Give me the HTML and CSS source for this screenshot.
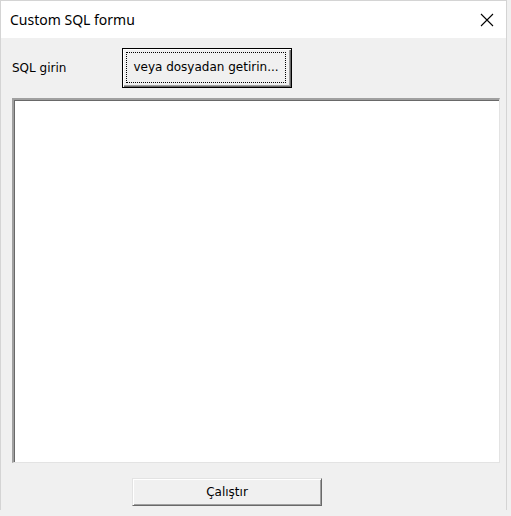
FILE: index.html
```html
<!DOCTYPE html>
<html>
<head>
<meta charset="utf-8">
<link rel="stylesheet" href="styles.css">
</head>
<body>
<div class="window">
  <div class="titlebar">
    <span class="title">Custom SQL formu</span>
    <svg class="close" width="14" height="14" viewBox="0 0 14 14"><path d="M1 1 L13 13 M13 1 L1 13" stroke="#000" stroke-width="1.1" fill="none"/></svg>
  </div>
  <div class="client">
    <div class="toprow">
      <span class="label">SQL girin</span>
      <div class="btn default"><span class="focus">veya dosyadan getirin...</span></div>
    </div>
    <div class="sqlbox"></div>
    <div class="btn run"><span>Çalıştır</span></div>
  </div>
</div>
</body>
</html>
```
FILE: styles.css
```css
html, body { margin: 0; padding: 0; }
body {
  width: 511px; height: 516px; overflow: hidden;
  background: #f0f0f0;
  font-family: "DejaVu Sans", sans-serif;
}
.window {
  width: 507px; height: 510px;
  box-sizing: border-box;
  border: 1px solid #d4d4d4;
  border-bottom: none;
  background: #f0f0f0;
  display: flex; flex-direction: column;
}
.titlebar {
  height: 37px; flex: none;
  background: #fff;
  display: flex; align-items: center; justify-content: space-between;
  padding: 0 9px 0 9px;
}
.title {
  font-family: "Noto Sans", "Open Sans", sans-serif;
  font-size: 14px; color: #000;
  margin-top: -1px;
}
.close { margin-right: 3px; }
.client {
  display: flex; flex-direction: column;
  padding: 10px 0 0 10px;
}
.toprow {
  display: flex; align-items: center; height: 40px;
}
.label {
  font-family: "DejaVu Sans", sans-serif;
  font-size: 12px; width: 110px; padding-left: 1px; color: #000;
}
.btn {
  box-sizing: border-box;
  background: #f0f0f0;
  display: flex; align-items: center; justify-content: center;
  font-family: "DejaVu Sans", sans-serif;
  color: #000;
}
.btn.default {
  width: 170px; height: 40px;
  border: 1px solid #000;
  box-shadow: inset 1px 1px 0 #fff, inset -1px -1px 0 #696969, inset -2px -2px 0 #a0a0a0;
  font-size: 12px;
  padding: 3px 5px 4px 3px;
}
.btn.default .focus {
  flex: 1; align-self: stretch;
  display: flex; align-items: center; justify-content: center;
  border: 1px dotted #000;
  padding-bottom: 1px;
}
.sqlbox {
  margin-top: 10px;
  width: 488px; height: 365px; box-sizing: border-box;
  background: #fff;
  border-top: 2px solid #a0a0a0;
  border-left: 2px solid #a0a0a0;
  border-right: 1px solid #e3e3e3;
  border-bottom: 1px solid #e3e3e3;
  box-shadow: inset 1px 1px 0 #696969;
  margin-left: 1px;
}
.btn.run {
  margin-top: 15px; margin-left: 121px;
  width: 190px; height: 28px;
  border-top: 1px solid #e3e3e3;
  border-left: 1px solid #e3e3e3;
  border-right: 1px solid #696969;
  border-bottom: 1px solid #696969;
  box-shadow: inset 1px 1px 0 #fff, inset -1px -1px 0 #a0a0a0;
  font-size: 12px;
}
```
